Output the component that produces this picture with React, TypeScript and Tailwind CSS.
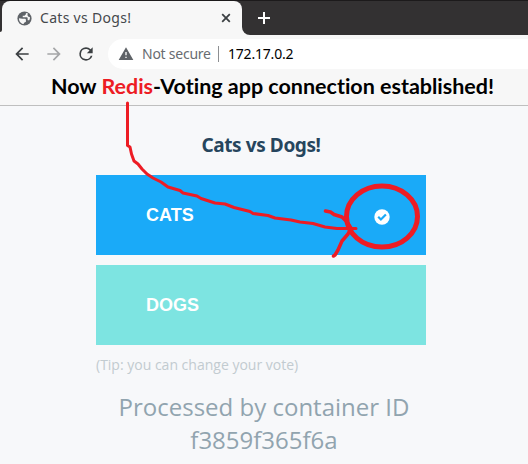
import React from "react";

function Globe() {
  return (
    <svg viewBox="0 0 24 24" className="h-[17px] w-[17px] shrink-0">
      <circle cx="12" cy="12" r="10" fill="#5f6368" />
      <path fill="#f7f7f7" d="M4.200 11.500l4.800.700h4l1 1.300v3l-3 2v1.300c-3.800-.6-7-3.800-6.800-8.300zM14 4.300v1.700l-2 2H9.500v2.300h5.500c1 0 1.500.8 1.500 1.500v2.500h2.200c.8-1.500 1.300-2.800.8-4.500l-2-.3-1.500-2.500 1-2.200z" />
    </svg>
  );
}

function TabStrip() {
  return (
    <div className="flex h-[35px] items-end border-t border-[#1c1a1b] bg-[#333132]">
      <div className="h-2 w-[2px] shrink-0 bg-[#f7f7f7]">
        <div className="h-[5px] w-[2px] rounded-br-[2px] bg-[#333132]" />
      </div>
      <div className="flex h-[34px] w-[240px] shrink-0 items-center rounded-t-lg bg-[#f7f7f7] pl-[14px] pr-[9px]">
        <Globe />
        <span className="-mt-[2px] ml-[7px] whitespace-nowrap font-['Noto_Sans'] text-[14px] tracking-[0.3px] text-[#45484c]">Cats vs Dogs!</span>
        <svg viewBox="0 0 14 14" className="ml-auto h-[14px] w-[14px] fill-none stroke-[#3c4043] stroke-[1.8]">
          <path d="M3.2 3.2l7.6 7.6M10.8 3.2l-7.6 7.6" />
        </svg>
      </div>
      <div className="h-2 w-2 bg-[#f7f7f7]">
        <div className="h-2 w-2 rounded-bl-lg bg-[#333132]" />
      </div>
      <svg viewBox="0 0 14 14" className="mb-[10px] ml-[7px] h-[14px] w-[14px] fill-none stroke-white stroke-2">
        <path d="M1 7h12M7 1v12" />
      </svg>
    </div>
  );
}

function Toolbar() {
  return (
    <div className="flex h-[34px] items-center bg-[#f7f7f7] pl-[12px] pt-1">
      <svg viewBox="0 0 24 24" className="h-5 w-5 shrink-0 fill-[#3c4043]">
        <path d="M20 11H7.83l5.59-5.59L12 4l-8 8 8 8 1.41-1.41L7.83 13H20v-2z" />
      </svg>
      <svg viewBox="0 0 24 24" className="ml-3 h-5 w-5 shrink-0 fill-[#a5a6a8]">
        <path d="M12 4l-1.41 1.41L16.17 11H4v2h12.17l-5.58 5.59L12 20l8-8z" />
      </svg>
      <svg viewBox="0 0 24 24" className="ml-3 h-5 w-5 shrink-0 fill-[#3c4043]">
        <path d="M17.65 6.35A7.96 7.96 0 0 0 12 4a8 8 0 1 0 7.73 10h-2.08A6 6 0 1 1 12 6c1.66 0 3.14.69 4.22 1.78L13 11h7V4l-2.35 2.35z" />
      </svg>
      <div className="ml-3 flex h-[30px] grow items-center rounded-l-full bg-white pl-[10px] font-['Noto_Sans'] text-[14px]">
        <svg viewBox="0 0 24 24" className="h-4 w-4 shrink-0 fill-[#5f6368]">
          <path d="M1 21h22L12 2 1 21zm12-3h-2v-2h2v2zm0-4h-2V9h2v5z" />
        </svg>
        <span className="-mt-[1px] ml-2 w-[69px] whitespace-nowrap tracking-[-0.25px] text-[#686c71]">Not secure</span>
        <span className="ml-[7px] h-4 w-px bg-[#8d8f92]" />
        <span className="-mt-[1px] ml-[9px] tracking-[-0.2px] text-black">172.17.0.2</span>
      </div>
    </div>
  );
}

function Annotation() {
  return (
    <svg viewBox="0 0 528 464" className="pointer-events-none absolute left-0 top-0 h-[464px] w-[528px] fill-none stroke-[#ed1c24]" strokeLinecap="round" strokeLinejoin="round">
      <path strokeWidth="3" d="M127.500 103V145.500L130 147L131.500 154L134 161L138 164L142 169L147 174L153 178L161 182L168 187L180 190.500L183 193L197 196L201 198.500L215 203L225 204L234 207.500L250 211.500L253 213.500L268 215.500L275 218L291 220L300 222L313 223.500L325 227L337 228.500H356" />
      <path strokeWidth="3.500" d="M325.500 211L330.500 212L334 214.500L342 217L347 222L351 228L348 234L342 241L338 250L335 255L333.500 256" />
      <ellipse cx="382" cy="216.500" rx="35.500" ry="30.500" strokeWidth="5" />
    </svg>
  );
}

export default function App() {
  return (
    <div className="relative h-[464px] w-[528px] overflow-hidden bg-[#f7f8fa]">
      <TabStrip />
      <Toolbar />
      <div className="flex h-[37px] justify-center border-b border-[#bfbfbf] bg-[#f7f7f7]">
        <p className="ml-[17px] whitespace-nowrap pt-[3px] font-[Lato] text-[21.5px] font-bold leading-[28px] tracking-[-0.01px] text-black">
          Now <span className="text-[#ed1c24]">Redis</span>-Voting app connection established!
        </p>
      </div>
      <main className="ml-24 flex w-[330px] flex-col">
        <h1 className="mt-[26px] h-[43px] whitespace-nowrap text-center font-['Noto_Sans'] text-[19px] font-bold leading-[26px] tracking-[-0.4px] text-[#26455d]">Cats vs Dogs!</h1>
        <button className="flex h-20 items-center justify-between bg-[#1aaaf8] pl-[50px] pr-[36px] font-['Liberation_Sans'] text-[18px] font-bold text-white">
          CATS
          <svg viewBox="0 0 16 16" className="mt-[3px] h-4 w-4">
            <circle cx="8" cy="8" r="7.7" fill="white" />
            <path d="M4.200 7.800l2.700 2.700 5-5" fill="none" stroke="#1aaaf8" strokeWidth="2.200" />
          </svg>
        </button>
        <button className="mt-[10px] flex h-20 items-center bg-[#7de4e1] pl-[50px] font-['Liberation_Sans'] text-[18px] font-bold text-white">DOGS</button>
        <p className="mt-[10px] whitespace-nowrap font-['Open_Sans'] text-[14px] leading-5 text-[#c2cbd0]">(Tip: you can change your vote)</p>
        <p className="mt-[15px] self-center whitespace-nowrap pl-[6px] text-center font-['Open_Sans'] text-[24px] leading-[33px] text-[#91a4af]">
          Processed by container ID<br />f3859f365f6a
        </p>
      </main>
      <Annotation />
    </div>
  );
}
